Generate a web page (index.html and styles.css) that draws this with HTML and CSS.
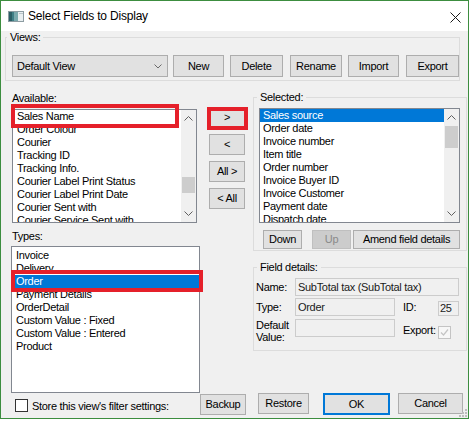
FILE: index.html
```html
<!DOCTYPE html>
<html>
<head>
<meta charset="utf-8">
<link rel="stylesheet" href="styles.css">
</head>
<body>
<div class="window">
  <div class="titlebar">
    <svg class="app-icon" width="16" height="11" viewBox="0 0 16 11">
      <rect x="0.5" y="0.5" width="15" height="10" fill="#e8eef0" stroke="#8d9ca2"/>
      <rect x="1" y="1" width="9" height="9" fill="#3f7f86"/>
      <rect x="1" y="1" width="3" height="9" fill="#2b5e66"/>
      <rect x="6" y="1" width="4" height="9" fill="#79a9ad"/>
      <rect x="11" y="2" width="4" height="1" fill="#b9c6ca"/>
    </svg>
    <span class="title">Select Fields to Display</span>
    <svg class="close" width="11" height="11" viewBox="0 0 11 11">
      <path d="M0.5 0.5 L10.5 10.5 M10.5 0.5 L0.5 10.5" stroke="#1a1a1a" stroke-width="1"/>
    </svg>
  </div>

  <div class="client">
    <div class="group views">
      <div class="group-label">Views:</div>
      <div class="views-row">
        <div class="combo">
          <span>Default View</span>
          <svg width="8" height="5" viewBox="0 0 8 5"><polyline points="0.5,0.5 4,4 7.5,0.5" fill="none" stroke="#6a6a6a"/></svg>
        </div>
        <div class="btn b-new">New</div>
        <div class="btn b-delete">Delete</div>
        <div class="btn b-rename">Rename</div>
        <div class="btn b-import">Import</div>
        <div class="btn b-export">Export</div>
      </div>
    </div>

    <div class="main">
      <div class="left-col">
        <div class="label lbl-available">Available:</div>
        <div class="listbox avail">
          <div class="items">
            <div class="row">Sales Name</div>
            <div class="row">Order Colour</div>
            <div class="row">Courier</div>
            <div class="row">Tracking ID</div>
            <div class="row">Tracking Info.</div>
            <div class="row">Courier Label Print Status</div>
            <div class="row">Courier Label Print Date</div>
            <div class="row">Courier Sent with</div>
            <div class="row">Courier Service Sent with</div>
          </div>
          <div class="scrollbar">
            <div class="arrow"><svg width="9" height="5" viewBox="0 0 9 5"><polyline points="0.5,4.5 4.5,0.5 8.5,4.5" fill="none" stroke="#606060"/></svg></div>
            <div class="track"><div class="thumb avail-thumb"></div></div>
            <div class="arrow"><svg width="9" height="5" viewBox="0 0 9 5"><polyline points="0.5,0.5 4.5,4.5 8.5,0.5" fill="none" stroke="#606060"/></svg></div>
          </div>
          <div class="annot annot-avail"></div>
        </div>
        <div class="label lbl-types">Types:</div>
        <div class="listbox types">
          <div class="items">
            <div class="row">Invoice</div>
            <div class="row">Delivery</div>
            <div class="row sel">Order</div>
            <div class="row">Payment Details</div>
            <div class="row">OrderDetail</div>
            <div class="row">Custom Value : Fixed</div>
            <div class="row">Custom Value : Entered</div>
            <div class="row">Product</div>
          </div>
          <div class="annot annot-types"></div>
        </div>
      </div>

      <div class="mid-col">
        <div class="btn mv annotated">&gt;<span class="annot annot-btn"></span></div>
        <div class="btn mv">&lt;</div>
        <div class="btn mv">All &gt;</div>
        <div class="btn mv">&lt; All</div>
      </div>

      <div class="right-col">
        <div class="group selected-group">
          <div class="group-label">Selected:</div>
          <div class="listbox selected">
            <div class="items">
              <div class="row sel">Sales source</div>
              <div class="row">Order date</div>
              <div class="row">Invoice number</div>
              <div class="row">Item title</div>
              <div class="row">Order number</div>
              <div class="row">Invoice Buyer ID</div>
              <div class="row">Invoice Customer</div>
              <div class="row">Payment date</div>
              <div class="row">Dispatch date</div>
            </div>
            <div class="scrollbar">
              <div class="arrow"><svg width="9" height="5" viewBox="0 0 9 5"><polyline points="0.5,4.5 4.5,0.5 8.5,4.5" fill="none" stroke="#606060"/></svg></div>
              <div class="track"><div class="thumb sel-thumb"></div></div>
              <div class="arrow"><svg width="9" height="5" viewBox="0 0 9 5"><polyline points="0.5,0.5 4.5,4.5 8.5,0.5" fill="none" stroke="#606060"/></svg></div>
            </div>
          </div>
          <div class="sel-buttons">
            <div class="btn b-down">Down</div>
            <div class="btn b-up disabled">Up</div>
            <div class="btn b-amend">Amend field details</div>
          </div>
        </div>

        <div class="group details-group">
          <div class="group-label">Field details:</div>
          <div class="frow frow-name">
            <div class="flabel">Name:</div>
            <div class="tbox tb-name">SubTotal tax (SubTotal tax)</div>
          </div>
          <div class="frow frow-type">
            <div class="flabel">Type:</div>
            <div class="tbox tb-type">Order</div>
            <div class="flabel2">ID:</div>
            <div class="tbox tb-id">25</div>
          </div>
          <div class="frow frow-default">
            <div class="flabel two">Default<br>Value:</div>
            <div class="tbox tb-default"></div>
            <div class="flabel2 export-label">Export:</div>
            <svg class="export-check" width="13" height="13" viewBox="0 0 13 13">
              <rect x="0.5" y="0.5" width="12" height="12" fill="#f7f7f7" stroke="#c4c4c4"/>
              <polyline points="3,6.5 5.5,9 10,3.5" fill="none" stroke="#c4c4c4" stroke-width="1.2"/>
            </svg>
          </div>
        </div>
      </div>
    </div>

    <div class="bottom-row">
      <div class="store">
        <div class="checkbox"></div>
        <div class="store-label">Store this view's filter settings:</div>
      </div>
      <div class="btn b-backup">Backup</div>
      <div class="btn b-restore">Restore</div>
      <div class="btn b-ok">OK</div>
      <div class="btn b-cancel">Cancel</div>
    </div>
  </div>

  <svg class="grip" width="8" height="8" viewBox="0 0 8 8">
    <rect x="6" y="0" width="2" height="2" fill="#bdbdbd"/>
    <rect x="3" y="3" width="2" height="2" fill="#bdbdbd"/>
    <rect x="6" y="3" width="2" height="2" fill="#bdbdbd"/>
    <rect x="0" y="6" width="2" height="2" fill="#bdbdbd"/>
    <rect x="3" y="6" width="2" height="2" fill="#bdbdbd"/>
    <rect x="6" y="6" width="2" height="2" fill="#bdbdbd"/>
  </svg>
</div>
</body>
</html>
```

FILE: styles.css
```css
* { box-sizing: border-box; }
html, body { margin: 0; padding: 0; background: #ffffff; }
body {
  font-family: "Liberation Sans", Arial, sans-serif;
  font-size: 11px;
  letter-spacing: -0.3px;
  color: #000;
}

.window {
  position: relative;
  width: 469px;
  height: 419px;
  border: 1px solid #3c8d3f;
  background: #f0f0f0;
  display: flex;
  flex-direction: column;
}

/* title bar */
.titlebar {
  flex: none;
  height: 30px;
  background: #ffffff;
  display: flex;
  align-items: center;
}
.app-icon { margin-left: 7px; flex: none; }
.title {
  margin-left: 4px;
  font-size: 12px;
  letter-spacing: -0.2px;
  line-height: 14px;
}
.close { margin-left: auto; margin-right: 7px; margin-top: 2px; }

.client { flex: 1; display: flex; flex-direction: column; }

/* group boxes */
.group { border: 1px solid #dcdcdc; }
.group-label {
  width: fit-content;
  margin: -7px 0 0 1px;
  padding: 0 3px;
  background: #f0f0f0;
  line-height: 13px;
}

/* buttons */
.btn {
  background: #e1e1e1;
  border: 1px solid #adadad;
  text-align: center;
  white-space: nowrap;
  flex: none;
}
.btn.disabled { background: #cccccc; border-color: #bfbfbf; color: #8a8a8a; }

/* views */
.views { margin: 6px 0 0 4px; width: 455px; padding-bottom: 3px; }
.views-row { display: flex; margin: 11px 0 0 6px; height: 22px; }
.views-row .btn { height: 22px; line-height: 20px; }
.combo {
  width: 157px;
  height: 22px;
  background: #e1e1e1;
  border: 1px solid #adadad;
  display: flex;
  align-items: center;
  justify-content: space-between;
  padding: 0 4px 0 4px;
  line-height: 20px;
}
.combo svg { margin-right: 1px; }
.b-new { margin-left: 5px; width: 51px; }
.b-delete { margin-left: 6px; width: 53px; }
.b-rename { margin-left: 7px; width: 52px; }
.b-import { margin-left: 6px; width: 51px; }
.b-export { margin-left: 7px; width: 53px; }

/* main */
.main { display: flex; align-items: flex-start; }
.left-col { margin-left: 10px; width: 190px; display: flex; flex-direction: column; }
.label { line-height: 13px; padding-left: 1px; }
.lbl-available { margin-top: 11px; }
.lbl-types { margin-top: 7px; }

.listbox {
  position: relative;
  border: 1px solid #828790;
  background: #ffffff;
  display: flex;
}
.items { flex: 1; overflow: hidden; }
.row { height: 13px; line-height: 13px; padding-left: 4px; white-space: nowrap; }
.row.sel { background: #0078d7; color: #ffffff; }

.avail { margin: 4px 0 0 1px; width: 185px; height: 114px; }
.types { margin-top: 3px; width: 189px; height: 147px; padding-top: 2px; }

.scrollbar { width: 15px; background: #f0f0f0; display: flex; flex-direction: column; flex: none; }
.arrow { height: 17px; display: flex; align-items: center; justify-content: center; flex: none; }
.track { flex: 1; }
.thumb { background: #cdcdcd; margin: 0 1px; }
.avail-thumb { margin-top: 50px; height: 16px; }
.sel-thumb { margin-top: 0px; height: 22px; }

.annot { position: absolute; border: 4px solid #e5202a; pointer-events: none; }
.annot-avail { left: -2px; top: -6px; width: 168px; height: 24px; }
.annot-types { left: -1px; top: 23px; width: 192px; height: 22px; }

/* middle buttons */
.mid-col { margin: 26px 0 0 8px; width: 36px; display: flex; flex-direction: column; }
.mv { height: 21px; line-height: 19px; margin-bottom: 6px; }
.annotated { position: relative; }
.annot-btn { left: -3px; top: -1px; width: 41px; height: 23px; }

/* right column */
.right-col { margin-left: 8px; width: 214px; display: flex; flex-direction: column; }
.selected-group { margin-top: 16px; padding-bottom: 1px; }
.selected-group .group-label { margin-left: 3px; }
.selected { margin: 4px 0 0 5px; width: 201px; height: 115px; }
.selected .row { padding-left: 3px; }
.sel-buttons { display: flex; margin-top: 7px; }
.sel-buttons .btn { height: 19px; line-height: 17px; }
.b-down { margin-left: 9px; width: 39px; }
.b-up { margin-left: 10px; width: 39px; }
.b-amend { margin-left: 2px; width: 107px; }

.details-group { margin-top: 16px; padding-bottom: 7px; }
.details-group .group-label { margin-left: 3px; }
.frow { display: flex; }
.frow-name { margin-top: 4px; height: 18px; align-items: center; }
.frow-type { margin-top: 2px; height: 18px; align-items: center; }
.frow-default { margin-top: 3px; align-items: flex-start; }
.flabel { margin-left: 2px; width: 39px; line-height: 13px; flex: none; }
.flabel.two { line-height: 12px; }
.flabel2 { margin-left: 8px; width: 35px; line-height: 13px; flex: none; }
.tbox {
  background: #f0f0f0;
  border: 1px solid #cccccc;
  height: 18px;
  line-height: 16px;
  padding-left: 2px;
  white-space: nowrap;
  overflow: hidden;
  flex: none;
  color: #1a1a1a;
}
.tb-name { width: 164px; }
.tb-type { width: 100px; }
.tb-id { width: 21px; height: 15px; line-height: 13px; padding-left: 1px; align-self: flex-end; }
.tb-default { width: 100px; }
.export-label { margin-top: 5px; }
.export-check { margin-top: 7px; flex: none; }

/* bottom row */
.bottom-row { display: flex; align-items: flex-start; height: 22px; }
.store { width: 199px; display: flex; align-items: flex-start; flex: none; }
.checkbox { margin: 6px 0 0 14px; width: 13px; height: 13px; border: 1px solid #333333; background: #ffffff; flex: none; }
.store-label { margin: 7px 0 0 4px; line-height: 13px; white-space: nowrap; }
.bottom-row .btn { height: 21px; line-height: 19px; }
.b-backup { width: 46px; margin-top: 1px; }
.b-restore { margin-left: 12px; width: 51px; }
.bottom-row .b-ok {
  margin-left: 14px;
  width: 67px;
  height: 22px;
  line-height: 18px;
  border: 2px solid #0078d7;
}
.b-cancel { margin-left: 8px; width: 65px; }

.grip { position: absolute; right: 1px; bottom: 1px; }
```
